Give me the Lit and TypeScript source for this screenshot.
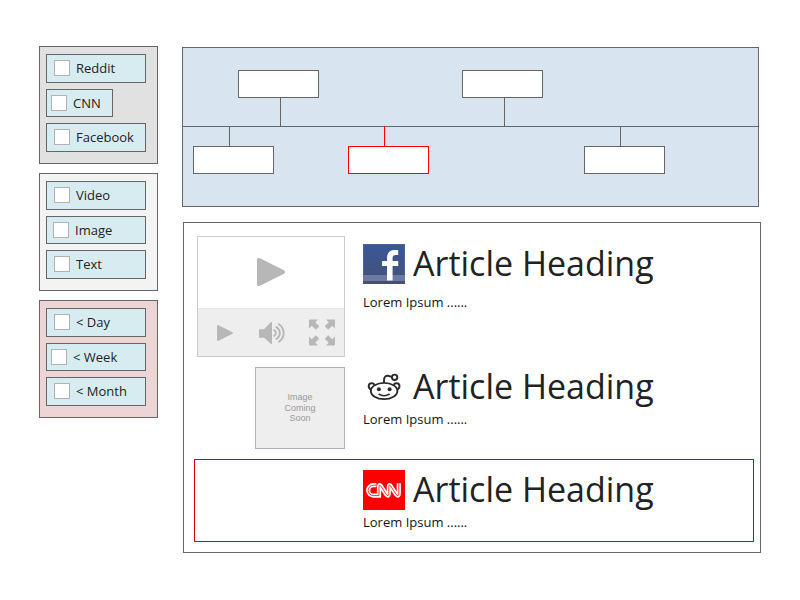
import { LitElement, html, css, svg } from "lit";
import { customElement } from "lit/decorators.js";

interface Option { label: string; size?: string; }

const groups: { tone: string; options: Option[] }[] = [
  { tone: "grey", options: [{ label: "Reddit" }, { label: "CNN", size: "narrow" }, { label: "Facebook" }] },
  { tone: "light", options: [{ label: "Video" }, { label: "Image", size: "snug" }, { label: "Text" }] },
  { tone: "pink", options: [{ label: "< Day" }, { label: "< Week", size: "tight" }, { label: "< Month" }] },
];

@customElement("filter-panel")
class FilterPanel extends LitElement {
  static properties = { options: { attribute: false } };
  declare options: Option[];

  static styles = css`
    :host { display: flex; flex-direction: column; align-items: flex-start; gap: 6px; box-sizing: border-box;
      width: 119px; height: 118px; padding: 7px 6px; border: 1px solid #666; }
    .option { display: flex; align-items: flex-start; box-sizing: border-box; width: 100px; height: 29px;
      padding: 5px 0 0 7px; gap: 6px; border: 1px solid #666; background: #d7ecf1; white-space: nowrap; }
    .option:nth-child(2) { height: 28px; }
    .narrow { width: 67px; padding-left: 4px; }
    .tight { padding-left: 4px; }
    .snug { padding-left: 6px; }
    .box { flex: none; box-sizing: border-box; width: 16px; height: 16px; border: 1px solid #b2b2b2; background: #fff; }
    .label { font-size: 13px; line-height: 18px; margin-top: -1px; }
  `;

  render() {
    return this.options.map((o) => html`<div class="option ${o.size ?? ""}">
      <span class="box"></span><span class="label">${o.label}</span></div>`);
  }
}

@customElement("event-timeline")
class EventTimeline extends LitElement {
  static styles = css`
    :host { display: block; position: relative; box-sizing: border-box; width: 577px; height: 160px;
      border: 1px solid #666; background: #d8e4ef; }
    .axis { position: absolute; left: 0; right: 0; top: 78px; height: 1px; background: #666; }
    .node { position: absolute; box-sizing: border-box; width: 81px; height: 28px; border: 1px solid #666; background: #fff; }
    .stem { position: absolute; width: 1px; background: #666; }
    .above { top: 22px; }
    .below { top: 98px; }
    .stem.above { top: 50px; height: 28px; }
    .stem.below { top: 79px; height: 20px; }
    .node.active { border-color: #f00; }
    .stem.active { background: #f00; top: 78px; height: 21px; }
  `;

  render() {
    const nodes = [
      { x: 55, stem: 97, kind: "above" },
      { x: 279, stem: 321, kind: "above" },
      { x: 10, stem: 46, kind: "below" },
      { x: 165, stem: 201, kind: "below active" },
      { x: 401, stem: 437, kind: "below" },
    ];
    return html`<div class="axis"></div>${nodes.map((n) => html`
      <div class="node ${n.kind}" style="left:${n.x}px"></div>
      <div class="stem ${n.kind}" style="left:${n.stem}px"></div>`)}`;
  }
}

const facebook = html`<svg width="42" height="40" viewBox="0 0 42 40">
  <defs><linearGradient id="fb" x1="0" y1="0" x2="0" y2="1">
    <stop offset="0" stop-color="#39579b"/><stop offset="1" stop-color="#465272"/></linearGradient></defs>
  <rect width="42" height="40" fill="url(#fb)"/>
  <rect x=".5" y=".5" width="41" height="39" fill="none" stroke="#536899" stroke-opacity=".7"/>
  <rect y="31" width="42" height="6" fill="#6c7aa5"/>
  <rect y="37" width="42" height="3" fill="#454f6e"/>
  <path fill="#fff" d="M24 36.6V22h-5v-5h5v-2.5c0-6 3-8.5 8-8.5h3.2v5h-2.2c-2.6 0-3.4 1-3.4 3V17h5.6v5h-5.6v14.6z"/>
</svg>`;

const reddit = html`<svg width="42" height="40" viewBox="0 0 42 40" fill="none" stroke="#2b2b2b" stroke-width="1.9">
  <ellipse cx="21.1" cy="24" rx="13.3" ry="8.1"/>
  <path d="M8 22.6C4.6 20.6 5.2 16.6 8.3 16.3C9.8 16.1 11 16.8 11.6 17.7M34.2 22.6C37.6 20.6 37 16.6 33.9 16.3C32.4 16.1 31.2 16.8 30.6 17.7"/>
  <path d="M21 16V13c0-3 1.8-4.6 4-4.2l3.8 1"/>
  <circle cx="31.6" cy="10.3" r="2.7"/>
  <path stroke-width="1.6" d="M15.6 27q5.5 3.4 11 0"/>
  <circle cx="15.9" cy="22.2" r="2" fill="#2b2b2b" stroke="none"/><circle cx="26.6" cy="22.2" r="2" fill="#2b2b2b" stroke="none"/>
</svg>`;

const tube = "M13.4 15.2H10.4a5.2 5.2 0 0 0 0 10.4H16V16.5Q16 14 17.7 15.8L23.3 24.5Q25.8 27 25.8 23.5V16.5Q25.8 14 27.5 15.8L33.2 24.5Q35.8 27 35.8 23.5V13.2";

const cnn = html`<svg width="42" height="40" viewBox="0 0 42 40" fill="none">
  <rect width="42" height="40" fill="#f00"/>
  <path stroke="#fff" stroke-width="4.2" d=${tube}/>
  <path stroke="#f00" stroke-width=".8" d=${tube}/>
</svg>`;

const arrow = "M1 0H9L6.2 2.8 10.3 6.8 6.8 10.3 2.8 6.2 0 9V1Q0 0 1 0z";

@customElement("article-feed")
class ArticleFeed extends LitElement {
  static styles = css`
    :host { display: flex; flex-direction: column; box-sizing: border-box; width: 578px; height: 331px;
      padding: 13px 6px 0 10px; border: 1px solid #666; background: #fff; }
    .row { display: grid; grid-template-columns: 148px 1fr; column-gap: 18px; box-sizing: border-box;
      padding: 0 3px; height: 121px; margin-bottom: 10px; }
    .row.image { height: 82px; }
    .row.active { height: 83px; padding: 0 2px; border: 1px solid #c00; margin: 0; }
    .media { justify-self: end; }
    .video { display: flex; flex-direction: column; box-sizing: border-box; width: 148px; height: 121px; border: 1px solid #ccc; }
    .screen { display: flex; align-items: center; justify-content: center; box-sizing: border-box; height: 71px; padding-bottom: 1px; }
    .controls { flex: 1; box-sizing: border-box; background: #eee; border-top: 1px solid #e6e6e6; }
    svg { display: block; }
    .soon { display: flex; align-items: center; justify-content: center; box-sizing: border-box; width: 90px; height: 82px;
      border: 1px solid #b2b2b2; background: #eee; color: #999; text-align: center;
      font: 9px/10.5px "Liberation Sans", Arial, sans-serif; }
    .body { padding-top: 8px; }
    .image .body { padding-top: 0; }
    .active .body { padding-top: 10px; }
    .title { display: flex; align-items: center; gap: 8px; height: 40px; font-size: 34px; line-height: 38px; white-space: nowrap; }
    .title span { margin-bottom: 2px; }
    .text { font-size: 13px; line-height: 18px; margin-top: 9px; color: #151515; }
    .image .text, .active .text { margin-top: 3px; }
  `;

  private body(icon: unknown) {
    return html`<div class="body"><div class="title">${icon}<span>Article Heading</span></div>
      <div class="text">Lorem Ipsum ......</div></div>`;
  }

  render() {
    return html`
      <div class="row">
        <div class="media video">
          <div class="screen"><svg width="30" height="30" viewBox="0 0 30 30" fill="#b7b7b7">
            <path d="M1 3Q1 0 4 1.3L28 13.2Q30 15 28 16.8L4 28.7Q1 30 1 27z"/></svg></div>
          <div class="controls"><svg width="146" height="47" viewBox="0 0 146 47" fill="#b7b7b7">
            <path d="M19 17.5Q19 15.5 21 16.4L34 22.9Q36 24 34 25.1L21 31.6Q19 32.5 19 30.5z"/>
            <path d="M61.5 20.2H66L72 14Q74 12 74 14.5V33.5Q74 36 72 34L66 28.8H61.5Q61 28.8 61 28V21Q61 20.2 61.5 20.2z"/>
            <g fill="none" stroke="#b7b7b7" stroke-width="1.9">
              <path d="M75.6 20.5c3 1.8 3 5.2 0 7M77.8 17.6c5.3 3.3 5.3 9.5 0 12.8M80.3 14.8c7.2 4.8 7.2 13.6 0 18.4"/></g>
            ${[0, 90, 180, 270].map((a) => svg`<path transform="rotate(${a} 124 23.5) translate(111 10.5)" d=${arrow}/>`)}
          </svg></div>
        </div>
        ${this.body(facebook)}
      </div>
      <div class="row image">
        <div class="media soon">Image<br>Coming<br>Soon</div>
        ${this.body(reddit)}
      </div>
      <div class="row active"><div></div>${this.body(cnn)}</div>`;
  }
}

@customElement("app-root")
class AppRoot extends LitElement {
  static styles = css`
    :host { display: flex; align-items: flex-start; gap: 24px; box-sizing: border-box; width: 800px; height: 600px;
      padding: 46px 39px; background: #fff; color: #222; font-family: "Open Sans", "Noto Sans", sans-serif; }
    .side { display: flex; flex-direction: column; gap: 9px; }
    .main { display: flex; flex-direction: column; gap: 15px; padding-top: 1px; }
    .grey { background: #e1e1e1; }
    .light { background: #f3f3f3; }
    .pink { background: #edd5d5; }
    article-feed { margin-left: 1px; }
  `;

  render() {
    return html`
      <div class="side">${groups.map((g) => html`<filter-panel class=${g.tone} .options=${g.options}></filter-panel>`)}</div>
      <div class="main"><event-timeline></event-timeline><article-feed></article-feed></div>`;
  }
}
